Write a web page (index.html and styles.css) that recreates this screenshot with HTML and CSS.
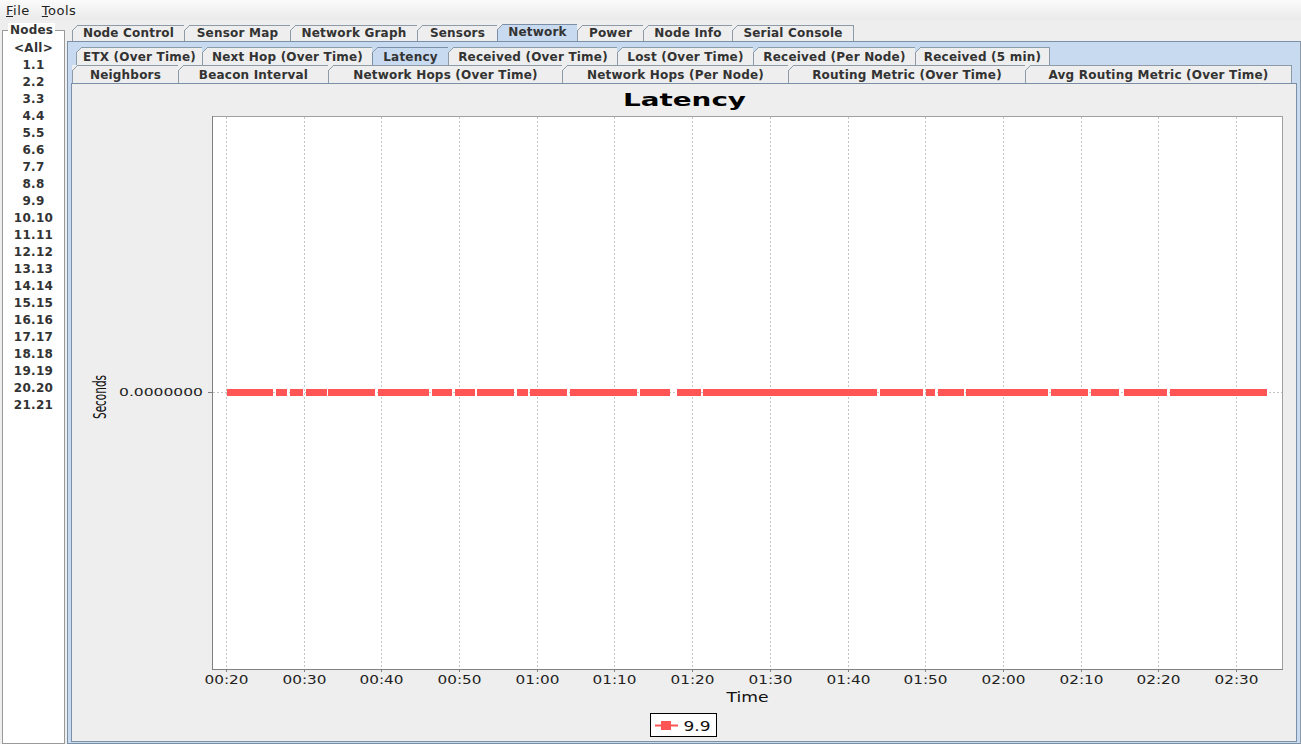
FILE: index.html
```html
<!DOCTYPE html>
<html>
<head>
<meta charset="utf-8">
<title>Latency</title>
<link rel="stylesheet" href="styles.css">
</head>
<body>
<div class="menubar">
  <span class="menu"><u>F</u>ile</span>
  <span class="menu"><u>T</u>ools</span>
</div>
<div class="main">
  <div class="nodes">
    <div class="nodes-box">
      <span class="nodes-title">Nodes</span>
      <ul class="node-list">
        <li>&lt;All&gt;</li><li>1.1</li><li>2.2</li><li>3.3</li><li>4.4</li><li>5.5</li><li>6.6</li><li>7.7</li><li>8.8</li><li>9.9</li><li>10.10</li><li>11.11</li><li>12.12</li><li>13.13</li><li>14.14</li><li>15.15</li><li>16.16</li><li>17.17</li><li>18.18</li><li>19.19</li><li>20.20</li><li>21.21</li>
      </ul>
    </div>
  </div>
  <div class="tabpane">
    <div class="tabrow toprow">
      <div class="tab t-nc">Node Control</div>
      <div class="tab t-sm">Sensor Map</div>
      <div class="tab t-ng">Network Graph</div>
      <div class="tab t-se">Sensors</div>
      <div class="tab t-nw selected">Network</div>
      <div class="tab t-pw">Power</div>
      <div class="tab t-ni">Node Info</div>
      <div class="tab t-sc last">Serial Console</div>
    </div>
    <div class="tabcontent">
      <div class="tabrow subrow1">
        <div class="tab s-etx">ETX (Over Time)</div>
        <div class="tab s-nh">Next Hop (Over Time)</div>
        <div class="tab s-lat selected">Latency</div>
        <div class="tab s-rot">Received (Over Time)</div>
        <div class="tab s-lost">Lost (Over Time)</div>
        <div class="tab s-rpn">Received (Per Node)</div>
        <div class="tab s-r5 last">Received (5 min)</div>
      </div>
      <div class="tabrow subrow2">
        <div class="tab s-nb">Neighbors</div>
        <div class="tab s-bi">Beacon Interval</div>
        <div class="tab s-hot">Network Hops (Over Time)</div>
        <div class="tab s-hpn">Network Hops (Per Node)</div>
        <div class="tab s-rm">Routing Metric (Over Time)</div>
        <div class="tab s-arm last">Avg Routing Metric (Over Time)</div>
      </div>
      <div class="panel">
        <svg class="chart" viewBox="72 84 1224 657" width="1224" height="657" xmlns="http://www.w3.org/2000/svg">
          <text class="c-title" x="684.5" y="106" text-anchor="middle" textLength="123" lengthAdjust="spacingAndGlyphs">Latency</text>
          <rect class="plot" x="212.5" y="116.5" width="1070" height="553"/>
          <g class="grid">
            <line x1="226.5" y1="117" x2="226.5" y2="669"/>
            <line x1="304.5" y1="117" x2="304.5" y2="669"/>
            <line x1="381.5" y1="117" x2="381.5" y2="669"/>
            <line x1="459.5" y1="117" x2="459.5" y2="669"/>
            <line x1="537.5" y1="117" x2="537.5" y2="669"/>
            <line x1="614.5" y1="117" x2="614.5" y2="669"/>
            <line x1="692.5" y1="117" x2="692.5" y2="669"/>
            <line x1="770.5" y1="117" x2="770.5" y2="669"/>
            <line x1="848.5" y1="117" x2="848.5" y2="669"/>
            <line x1="925.5" y1="117" x2="925.5" y2="669"/>
            <line x1="1003.5" y1="117" x2="1003.5" y2="669"/>
            <line x1="1081.5" y1="117" x2="1081.5" y2="669"/>
            <line x1="1158.5" y1="117" x2="1158.5" y2="669"/>
            <line x1="1236.5" y1="117" x2="1236.5" y2="669"/>
            <line x1="213" y1="392.5" x2="1282" y2="392.5"/>
          </g>
          <g class="axis">
            <line x1="212.5" y1="116" x2="212.5" y2="670"/>
            <line x1="212" y1="669.5" x2="1283" y2="669.5"/>
            <line x1="208" y1="392.5" x2="212" y2="392.5"/>
            <line x1="226.5" y1="670" x2="226.5" y2="672"/>
            <line x1="304.5" y1="670" x2="304.5" y2="672"/>
            <line x1="381.5" y1="670" x2="381.5" y2="672"/>
            <line x1="459.5" y1="670" x2="459.5" y2="672"/>
            <line x1="537.5" y1="670" x2="537.5" y2="672"/>
            <line x1="614.5" y1="670" x2="614.5" y2="672"/>
            <line x1="692.5" y1="670" x2="692.5" y2="672"/>
            <line x1="770.5" y1="670" x2="770.5" y2="672"/>
            <line x1="848.5" y1="670" x2="848.5" y2="672"/>
            <line x1="925.5" y1="670" x2="925.5" y2="672"/>
            <line x1="1003.5" y1="670" x2="1003.5" y2="672"/>
            <line x1="1081.5" y1="670" x2="1081.5" y2="672"/>
            <line x1="1158.5" y1="670" x2="1158.5" y2="672"/>
            <line x1="1236.5" y1="670" x2="1236.5" y2="672"/>
          </g>
          <g class="series">
            <rect x="227" y="389" width="46" height="7"/>
            <rect x="276" y="389" width="11" height="7"/>
            <rect x="290" y="389" width="13" height="7"/>
            <rect x="306" y="389" width="21" height="7"/>
            <rect x="328" y="389" width="47" height="7"/>
            <rect x="378" y="389" width="51" height="7"/>
            <rect x="432" y="389" width="20" height="7"/>
            <rect x="455" y="389" width="20" height="7"/>
            <rect x="477" y="389" width="37" height="7"/>
            <rect x="517" y="389" width="11" height="7"/>
            <rect x="530" y="389" width="37" height="7"/>
            <rect x="570" y="389" width="67" height="7"/>
            <rect x="640" y="389" width="30" height="7"/>
            <rect x="677" y="389" width="24" height="7"/>
            <rect x="703" y="389" width="174" height="7"/>
            <rect x="880" y="389" width="43" height="7"/>
            <rect x="926" y="389" width="9" height="7"/>
            <rect x="938" y="389" width="26" height="7"/>
            <rect x="966" y="389" width="82" height="7"/>
            <rect x="1051" y="389" width="37" height="7"/>
            <rect x="1091" y="389" width="28" height="7"/>
            <rect x="1124" y="389" width="43" height="7"/>
            <rect x="1170" y="389" width="97" height="7"/>
          </g>
          <g class="ticks">
            <text x="226.5" y="683.5" textLength="44" lengthAdjust="spacingAndGlyphs">00:20</text>
            <text x="304.5" y="683.5" textLength="44" lengthAdjust="spacingAndGlyphs">00:30</text>
            <text x="381.5" y="683.5" textLength="44" lengthAdjust="spacingAndGlyphs">00:40</text>
            <text x="459.5" y="683.5" textLength="44" lengthAdjust="spacingAndGlyphs">00:50</text>
            <text x="537.5" y="683.5" textLength="44" lengthAdjust="spacingAndGlyphs">01:00</text>
            <text x="614.5" y="683.5" textLength="44" lengthAdjust="spacingAndGlyphs">01:10</text>
            <text x="692.5" y="683.5" textLength="44" lengthAdjust="spacingAndGlyphs">01:20</text>
            <text x="770.5" y="683.5" textLength="44" lengthAdjust="spacingAndGlyphs">01:30</text>
            <text x="848.5" y="683.5" textLength="44" lengthAdjust="spacingAndGlyphs">01:40</text>
            <text x="925.5" y="683.5" textLength="44" lengthAdjust="spacingAndGlyphs">01:50</text>
            <text x="1003.5" y="683.5" textLength="44" lengthAdjust="spacingAndGlyphs">02:00</text>
            <text x="1081.5" y="683.5" textLength="44" lengthAdjust="spacingAndGlyphs">02:10</text>
            <text x="1158.5" y="683.5" textLength="44" lengthAdjust="spacingAndGlyphs">02:20</text>
            <text x="1236.5" y="683.5" textLength="44" lengthAdjust="spacingAndGlyphs">02:30</text>
          </g>
          <text class="ytick" x="203" y="396" text-anchor="end" textLength="84" lengthAdjust="spacingAndGlyphs">0.0000000</text>
          <text class="axis-label" x="747.5" y="701.5" text-anchor="middle" textLength="42" lengthAdjust="spacingAndGlyphs">Time</text>
          <text class="axis-label y-label" transform="translate(106 397) rotate(-90)" x="0" y="0" text-anchor="middle" textLength="44" lengthAdjust="spacingAndGlyphs">Seconds</text>
          <g class="legend">
            <rect class="legend-box" x="650.5" y="713.5" width="66" height="23"/>
            <line class="legend-line" x1="655" y1="725.5" x2="678" y2="725.5"/>
            <rect class="legend-mark" x="661" y="721" width="10" height="9"/>
            <text class="legend-text" x="683.5" y="730.5" textLength="27" lengthAdjust="spacingAndGlyphs">9.9</text>
          </g>
        </svg>
      </div>
    </div>
  </div>
</div>
</body>
</html>
```
FILE: styles.css
```css
* { box-sizing: border-box; }
html, body { margin: 0; padding: 0; }
body {
  width: 1301px;
  height: 744px;
  overflow: hidden;
  background: #eeeeee;
  font-family: "DejaVu Sans", "Liberation Sans", sans-serif;
  color: #333333;
}

/* menu bar */
.menubar {
  height: 20px;
  display: flex;
  align-items: center;
  gap: 12px;
  padding-left: 6px;
  font-size: 13px;
  letter-spacing: 0.5px;
  color: #222222;
  background: linear-gradient(#fbfbfb, #eaeaea);
}
.menu u { text-decoration: underline; text-underline-offset: 1px; }

.main {
  display: flex;
  height: 724px;
}

/* nodes list */
.nodes {
  width: 63px;
  margin-left: 2px;
  padding-top: 10px;
  display: flex;
  flex-direction: column;
}
.nodes-box {
  position: relative;
  flex: 1;
  border: 1px solid #9a9a9a;
  background: #ffffff;
}
.nodes-title {
  position: absolute;
  top: -8px;
  left: 5px;
  padding: 0 2px;
  background: #ffffff;
  font-weight: bold;
  font-size: 12px;
  letter-spacing: 0.2px;
  line-height: 14px;
  color: #333333;
}
.node-list {
  list-style: none;
  margin: 0;
  padding: 9px 0 0 0;
}
.node-list li {
  height: 17px;
  line-height: 17px;
  text-align: center;
  font-weight: bold;
  font-size: 12px;
  letter-spacing: 0.3px;
  color: #333333;
}

/* tab panes */
.tabpane {
  flex: 1;
  margin-left: 2px;
  display: flex;
  flex-direction: column;
}
.tabrow {
  display: flex;
  align-items: flex-end;
}
.toprow {
  height: 21px;
  padding-left: 5px;
  --behind: #eeeeee;
}
.tab {
  position: relative;
  flex: none;
  border-left: 1px solid #8d9aa7;
  border-top: 1px solid #8d9aa7;
  background: #eeeeee;
  text-align: center;
  font-weight: bold;
  font-size: 12px;
  letter-spacing: 0.2px;
  color: #333333;
  white-space: nowrap;
}
.tab.last { border-right: 1px solid #8d9aa7; }
.tab::before {
  content: "";
  position: absolute;
  left: -1px;
  top: -1px;
  width: 6px;
  height: 6px;
  background: linear-gradient(to bottom right, var(--behind) 0, var(--behind) calc(50% - 0.7px), #8d9aa7 calc(50% - 0.7px), #8d9aa7 calc(50% + 0.7px), transparent calc(50% + 0.7px));
}
.tab.selected {
  background: #c8daef;
  border-color: #7b8fa6;
}
.toprow .tab {
  height: 16px;
  line-height: 14px;
}
.toprow .tab.selected { height: 17px; }

.t-nc { width: 112px; }
.t-sm { width: 106px; }
.t-ng { width: 127px; }
.t-se { width: 80px; }
.t-nw { width: 80px; }
.t-pw { width: 66px; }
.t-ni { width: 89px; }
.t-sc { width: 122px; }

.tabcontent {
  flex: 1;
  display: flex;
  flex-direction: column;
  border: 1px solid #7b8fa6;
  border-right-color: #8d9aa7;
  background: #c8daef;
  padding: 5px 3px 1px 3px;
}
.subrow1 {
  height: 18px;
  padding-left: 5px;
  --behind: #c8daef;
}
.subrow2 {
  height: 18px;
  padding-left: 1px;
  --behind: #eeeeee;
}
.subrow1 .tab, .subrow2 .tab {
  height: 18px;
  line-height: 18px;
}

.s-etx { width: 126px; }
.s-nh { width: 170px; }
.s-lat { width: 76px; }
.s-rot { width: 169px; }
.s-lost { width: 136px; }
.s-rpn { width: 162px; }
.s-r5 { width: 135px; }

.s-nb { width: 106px; }
.s-bi { width: 150px; }
.s-hot { width: 234px; }
.s-hpn { width: 226px; }
.s-rm { width: 237px; }
.s-arm { width: 267px; }

.panel {
  flex: 1;
  border: 1px solid #7b8fa6;
  background: #eeeeee;
  overflow: hidden;
}
.chart {
  display: block;
  font-family: "DejaVu Sans", "Liberation Sans", sans-serif;
}
.c-title {
  font-size: 18px;
  font-weight: bold;
  fill: #000000;
}
.plot {
  fill: #ffffff;
  stroke: #a0a0a0;
  stroke-width: 1;
}
.grid line {
  stroke: #c4c4c4;
  stroke-width: 1;
  stroke-dasharray: 2 2;
}
.axis line {
  stroke: #808080;
  stroke-width: 1;
}
.series rect { fill: #ff5555; }
.ticks text {
  font-size: 12px;
  fill: #222222;
  text-anchor: middle;
}
.ytick {
  font-size: 11px;
  fill: #222222;
}
.axis-label {
  font-size: 14px;
  fill: #111111;
}
.y-label { font-size: 17.5px; }
.legend-box {
  fill: #ffffff;
  stroke: #000000;
  stroke-width: 1;
}
.legend-line {
  stroke: #ff5555;
  stroke-width: 2;
}
.legend-mark { fill: #ff5555; }
.legend-text {
  font-size: 14px;
  fill: #111111;
}
```
